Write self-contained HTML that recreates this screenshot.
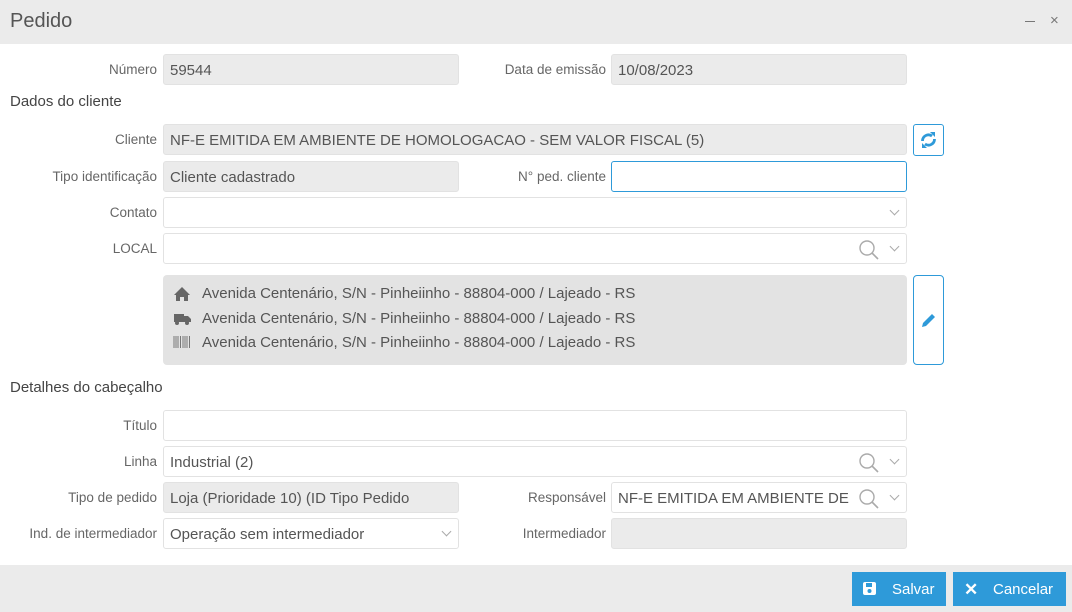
<!DOCTYPE html>
<html><head><meta charset="utf-8"><style>
*{box-sizing:border-box;margin:0;padding:0}
body{width:1072px;height:612px;position:relative;background:#fff;font-family:"Liberation Sans",sans-serif;overflow:hidden;color:#555}
.a{position:absolute}
.hdr{left:0;top:0;width:1072px;height:44px;background:#ebebeb}
.lbl{font-size:13.5px;color:#666;text-align:right;line-height:32px;height:31px}
.in{border:1px solid #e2e2e2;border-radius:3px;font-size:15px;color:#555;line-height:31px;padding-left:6px;height:31px;white-space:nowrap;overflow:hidden}
.g{background:#ebebeb}
.w{background:#fff}
.sec{font-size:15px;color:#444;left:10px}
.chev{position:absolute;right:8px;top:9px;width:7px;height:7px;border-right:1px solid #aaa;border-bottom:1px solid #aaa;transform:rotate(45deg)}
.btn{background:#2e9ad9;color:#fff;font-size:15px;line-height:36px;height:34px}
</style></head><body>
<div class="a hdr"></div>
<div class="a" style="left:10px;top:10px;font-size:20px;color:#555">Pedido</div>
<div class="a" style="left:1025px;top:21px;width:10px;height:1px;background:#777"></div>
<div class="a" style="left:1050px;top:12px;font-size:15px;color:#777">×</div>

<div class="a lbl" style="left:0;width:157px;top:54px">Número</div>
<div class="a in g" style="left:163px;top:54px;width:296px">59544</div>
<div class="a lbl" style="left:450px;width:156px;top:54px">Data de emissão</div>
<div class="a in g" style="left:611px;top:54px;width:296px">10/08/2023</div>

<div class="a sec" style="top:93px">Dados do cliente</div>

<div class="a lbl" style="left:0;width:157px;top:124px">Cliente</div>
<div class="a in g" style="left:163px;top:124px;width:744px">NF-E EMITIDA EM AMBIENTE DE HOMOLOGACAO - SEM VALOR FISCAL (5)</div>
<div class="a" style="left:913px;top:124px;width:31px;height:32px;border:1px solid #2e9ad9;border-radius:3px">
<svg width="29" height="30" viewBox="0 0 29 30"><g fill="none" stroke="#2e9ad9" stroke-width="2.8"><path d="M8.5 16a6 6 0 0 1 9.5-5"/><path d="M20.5 14a6 6 0 0 1-9.5 5"/></g><path d="M16 7l5 0 0 5z M13 23l-5 0 0-5z" fill="#2e9ad9"/></svg></div>

<div class="a lbl" style="left:0;width:157px;top:161px">Tipo identificação</div>
<div class="a in g" style="left:163px;top:161px;width:296px">Cliente cadastrado</div>
<div class="a lbl" style="left:450px;width:156px;top:161px">N° ped. cliente</div>
<div class="a in w" style="left:611px;top:161px;width:296px;border-color:#2e9ad9"></div>

<div class="a lbl" style="left:0;width:157px;top:197px">Contato</div>
<div class="a in w" style="left:163px;top:197px;width:744px"><span class="chev"></span></div>

<div class="a lbl" style="left:0;width:157px;top:233px">LOCAL</div>
<div class="a in w" style="left:163px;top:233px;width:744px"><svg class="a" style="right:26px;top:5px" width="22" height="22"><circle cx="9" cy="9" r="7" fill="none" stroke="#aaa" stroke-width="1.4"/><path d="M14 14l6 6" stroke="#aaa" stroke-width="1.6"/></svg><span class="chev"></span></div>

<div class="a" style="left:163px;top:275px;width:744px;height:90px;background:#e3e3e3;border-radius:4px;font-size:15px;color:#555;line-height:24.5px;padding:7px 0 0 39px">
Avenida Centenário, S/N - Pinheiinho - 88804-000 / Lajeado - RS<br>Avenida Centenário, S/N - Pinheiinho - 88804-000 / Lajeado - RS<br>Avenida Centenário, S/N - Pinheiinho - 88804-000 / Lajeado - RS</div>
<svg class="a" style="left:173px;top:285px" width="20" height="70"><path d="M1 10L9 2l8 8h-2v6h-4v-4H7v4H3v-6z" fill="#666"/><path d="M1 29h10v8H1z M11 31h4l3 3v3h-7z" fill="#666"/><circle cx="4" cy="38" r="2" fill="#666"/><circle cx="14" cy="38" r="2" fill="#666"/><path d="M1 51v12M3 51v12M5 51v12M7.5 51v12M10 51v12M12 51v12M14 51v12M16.5 51v12" stroke="#777" stroke-width="1"/></svg>
<div class="a" style="left:913px;top:275px;width:31px;height:90px;border:1px solid #2e9ad9;border-radius:4px">
<svg class="a" style="left:7px;top:36px" width="16" height="16"><path d="M1 15l1-4 9-9 3 3-9 9z" fill="#2e9ad9"/></svg></div>

<div class="a sec" style="top:379px">Detalhes do cabeçalho</div>

<div class="a lbl" style="left:0;width:157px;top:410px">Título</div>
<div class="a in w" style="left:163px;top:410px;width:744px"></div>

<div class="a lbl" style="left:0;width:157px;top:446px">Linha</div>
<div class="a in w" style="left:163px;top:446px;width:744px">Industrial (2)<svg class="a" style="right:26px;top:5px" width="22" height="22"><circle cx="9" cy="9" r="7" fill="none" stroke="#aaa" stroke-width="1.4"/><path d="M14 14l6 6" stroke="#aaa" stroke-width="1.6"/></svg><span class="chev"></span></div>

<div class="a lbl" style="left:0;width:157px;top:482px">Tipo de pedido</div>
<div class="a in g" style="left:163px;top:482px;width:296px">Loja (Prioridade 10) (ID Tipo Pedido</div>
<div class="a lbl" style="left:450px;width:156px;top:482px">Responsável</div>
<div class="a in w" style="left:611px;top:482px;width:296px">NF-E EMITIDA EM AMBIENTE DE<svg class="a" style="right:26px;top:5px;background:#fff" width="22" height="22"><circle cx="9" cy="9" r="7" fill="none" stroke="#aaa" stroke-width="1.4"/><path d="M14 14l6 6" stroke="#aaa" stroke-width="1.6"/></svg><span class="chev"></span></div>

<div class="a lbl" style="left:0;width:157px;top:518px">Ind. de intermediador</div>
<div class="a in w" style="left:163px;top:518px;width:296px">Operação sem intermediador<span class="chev"></span></div>
<div class="a lbl" style="left:450px;width:156px;top:518px">Intermediador</div>
<div class="a in g" style="left:611px;top:518px;width:296px"></div>

<div class="a" style="left:0;top:565px;width:1072px;height:47px;background:#ebebeb"></div>
<div class="a btn" style="left:852px;top:572px;width:94px;padding-left:40px">Salvar</div>
<svg class="a" style="left:863px;top:582px" width="13" height="13"><rect x="0" y="0" width="13" height="13" rx="2" fill="#fff"/><rect x="3" y="1" width="6" height="4" fill="#2e9ad9"/><circle cx="6.5" cy="9" r="2" fill="#2e9ad9"/></svg>
<div class="a btn" style="left:953px;top:572px;width:113px;padding-left:40px">Cancelar</div>
<div class="a" style="left:964px;top:573px;color:#fff;font-size:17px;line-height:34px;font-weight:bold">✕</div>
</body></html>
